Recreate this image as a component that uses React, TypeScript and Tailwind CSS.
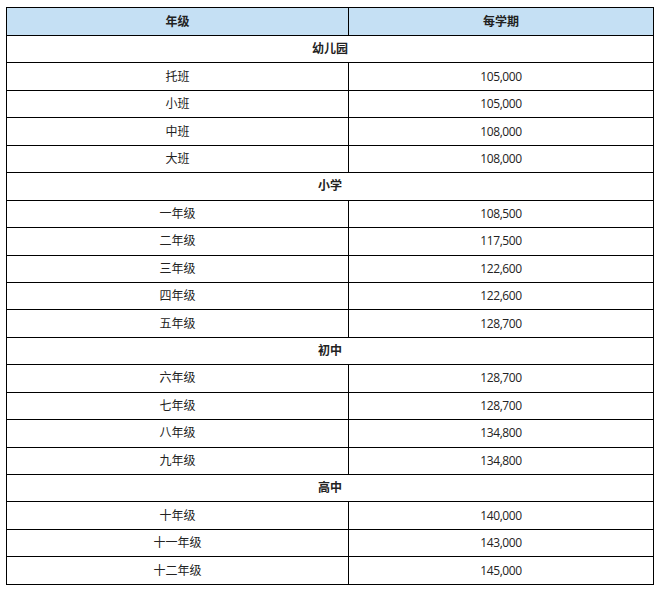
const sections: { title: string; rows: [string, string][] }[] = [
  {
    title: "幼儿园",
    rows: [
      ["托班", "105,000"],
      ["小班", "105,000"],
      ["中班", "108,000"],
      ["大班", "108,000"],
    ],
  },
  {
    title: "小学",
    rows: [
      ["一年级", "108,500"],
      ["二年级", "117,500"],
      ["三年级", "122,600"],
      ["四年级", "122,600"],
      ["五年级", "128,700"],
    ],
  },
  {
    title: "初中",
    rows: [
      ["六年级", "128,700"],
      ["七年级", "128,700"],
      ["八年级", "134,800"],
      ["九年级", "134,800"],
    ],
  },
  {
    title: "高中",
    rows: [
      ["十年级", "140,000"],
      ["十一年级", "143,000"],
      ["十二年级", "145,000"],
    ],
  },
];

const cell = "border border-black text-center align-middle p-0";

export default function App() {
  return (
    <div className="min-h-screen bg-white pt-[7px] pl-[6px] font-['Open_Sans','Noto_Sans_CJK_SC',sans-serif] text-[12px] text-[#222]">
      <table className="w-[648px] border-collapse table-fixed">
        <colgroup>
          <col className="w-[342px]" />
          <col />
        </colgroup>
        <thead>
          <tr className="h-[28px] bg-[#c5e0f4]">
            <th className={cell + " font-bold"}>年级</th>
            <th className={cell + " font-bold"}>每学期</th>
          </tr>
        </thead>
        <tbody>
          {sections.map((s) => (
            <>
              <tr key={s.title} className="h-[27.45px]">
                <td colSpan={2} className={cell + " font-bold"}>
                  {s.title}
                </td>
              </tr>
              {s.rows.map(([grade, fee]) => (
                <tr key={grade} className="h-[27.45px]">
                  <td className={cell}>{grade}</td>
                  <td className={cell + " tracking-[-0.4px]"}>{fee}</td>
                </tr>
              ))}
            </>
          ))}
        </tbody>
      </table>
    </div>
  );
}
